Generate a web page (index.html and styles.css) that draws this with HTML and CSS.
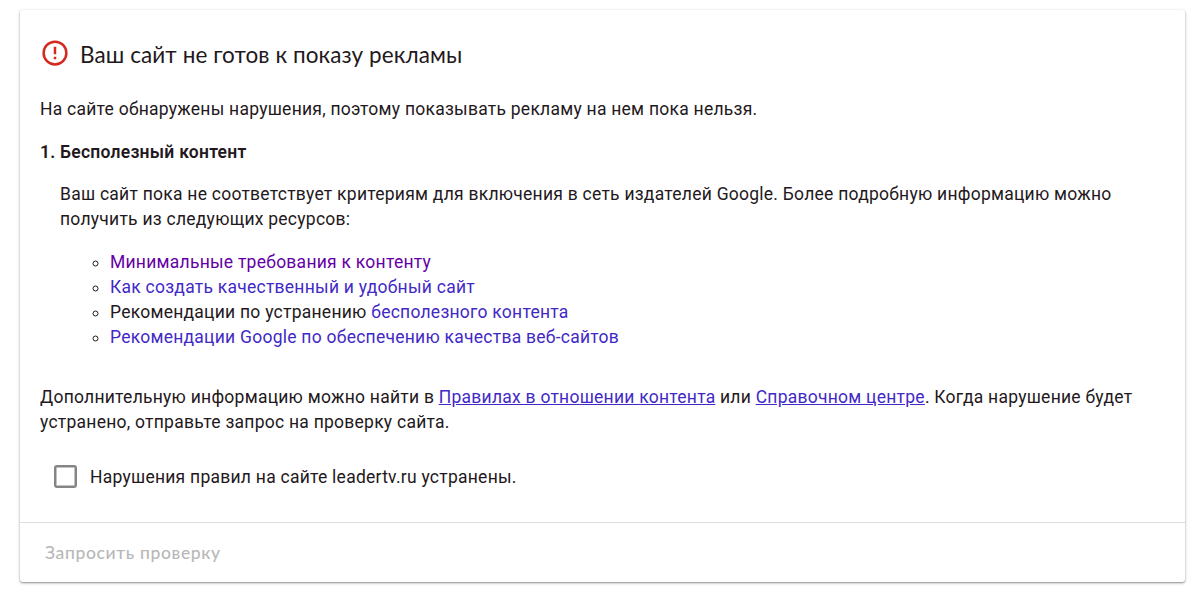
FILE: index.html
```html
<!DOCTYPE html>
<html lang="ru">
<head>
<meta charset="utf-8">
<title>Проверка сайта</title>
<link rel="stylesheet" href="styles.css">
</head>
<body>
<main class="card">
  <div class="content">
    <header class="heading">
      <svg class="alert" viewBox="0 0 24 24" aria-hidden="true"><circle cx="12" cy="12" r="9.1"/><path d="M12 7v6M12 15v2"/></svg>
      <h1 class="title">Ваш сайт не готов к показу рекламы</h1>
    </header>
    <p class="intro">На сайте обнаружены нарушения, поэтому показывать рекламу на нем пока нельзя.</p>
    <h2 class="issue">1. Бесполезный контент</h2>
    <p class="details">Ваш сайт пока не соответствует критериям для включения в сеть издателей Google. Более подробную информацию можно<br>получить из следующих ресурсов:</p>
    <ul class="resources">
      <li><a class="visited" href="#">Минимальные требования к контенту</a></li>
      <li><a href="#">Как создать качественный и удобный сайт</a></li>
      <li>Рекомендации по устранению <a href="#">бесполезного контента</a></li>
      <li><a href="#">Рекомендации Google по обеспечению качества веб-сайтов</a></li>
    </ul>
    <p class="more">Дополнительную информацию можно найти в <a href="#">Правилах в отношении контента</a> или <a href="#">Справочном центре</a>. Когда нарушение будет<br>устранено, отправьте запрос на проверку сайта.</p>
    <label class="confirm"><input class="box" type="checkbox"><span>Нарушения правил на сайте leadertv.ru устранены.</span></label>
  </div>
  <footer class="actions"><button class="request" disabled>Запросить проверку</button></footer>
</main>
</body>
</html>
```

FILE: styles.css
```css
* { box-sizing: border-box; }
body { margin: 0; min-height: 601px; padding: 10px 8px 0 20px; background: #fff; color: #231820; font: 17.5px/25px Roboto, sans-serif; letter-spacing: 0.247px; white-space: nowrap; }
h1, h2, p, ul { margin: 0; }
.card { height: 572px; border-radius: 3px; background: #fff; box-shadow: 0 1px 3px rgba(0,0,0,.36), 0 1px 1px rgba(0,0,0,.15); }
.content { height: 512px; padding: 28px 20px 0; }
.heading { display: flex; align-items: flex-start; height: 59px; }
.alert { width: 30px; height: 30px; margin-right: 10px; fill: none; stroke: #d5281f; stroke-width: 2; }
.title { font: 400 22.5px/34px Lato, sans-serif; letter-spacing: 0.09px; }
.intro { height: 43px; }
.issue { height: 42px; font-size: 17.5px; line-height: 25px; font-weight: 600; letter-spacing: 0.245px; }
.details { height: 68px; padding-left: 20px; }
.resources { height: 135px; padding-left: 70px; list-style: circle; }
a { color: #4229c6; text-decoration: none; }
.visited { color: #6500a5; }
.more a { text-decoration: underline; }
.more { height: 80px; }
.confirm { display: flex; align-items: center; gap: 13px; height: 25px; padding-left: 14px; }
.box { appearance: none; width: 23px; height: 23px; margin: 0 0 2px; border: 2px solid #858585; border-radius: 3px; background: #fff; box-shadow: inset 0 0 0 0.5px #858585; }
.actions { height: 60px; border-top: 1px solid #dedede; padding: 16px 25px; }
.request { display: block; padding: 0; border: 0; background: none; color: #b8b8b8; font: 500 17.5px/28px Lato, sans-serif; letter-spacing: 0.64px; }
```
